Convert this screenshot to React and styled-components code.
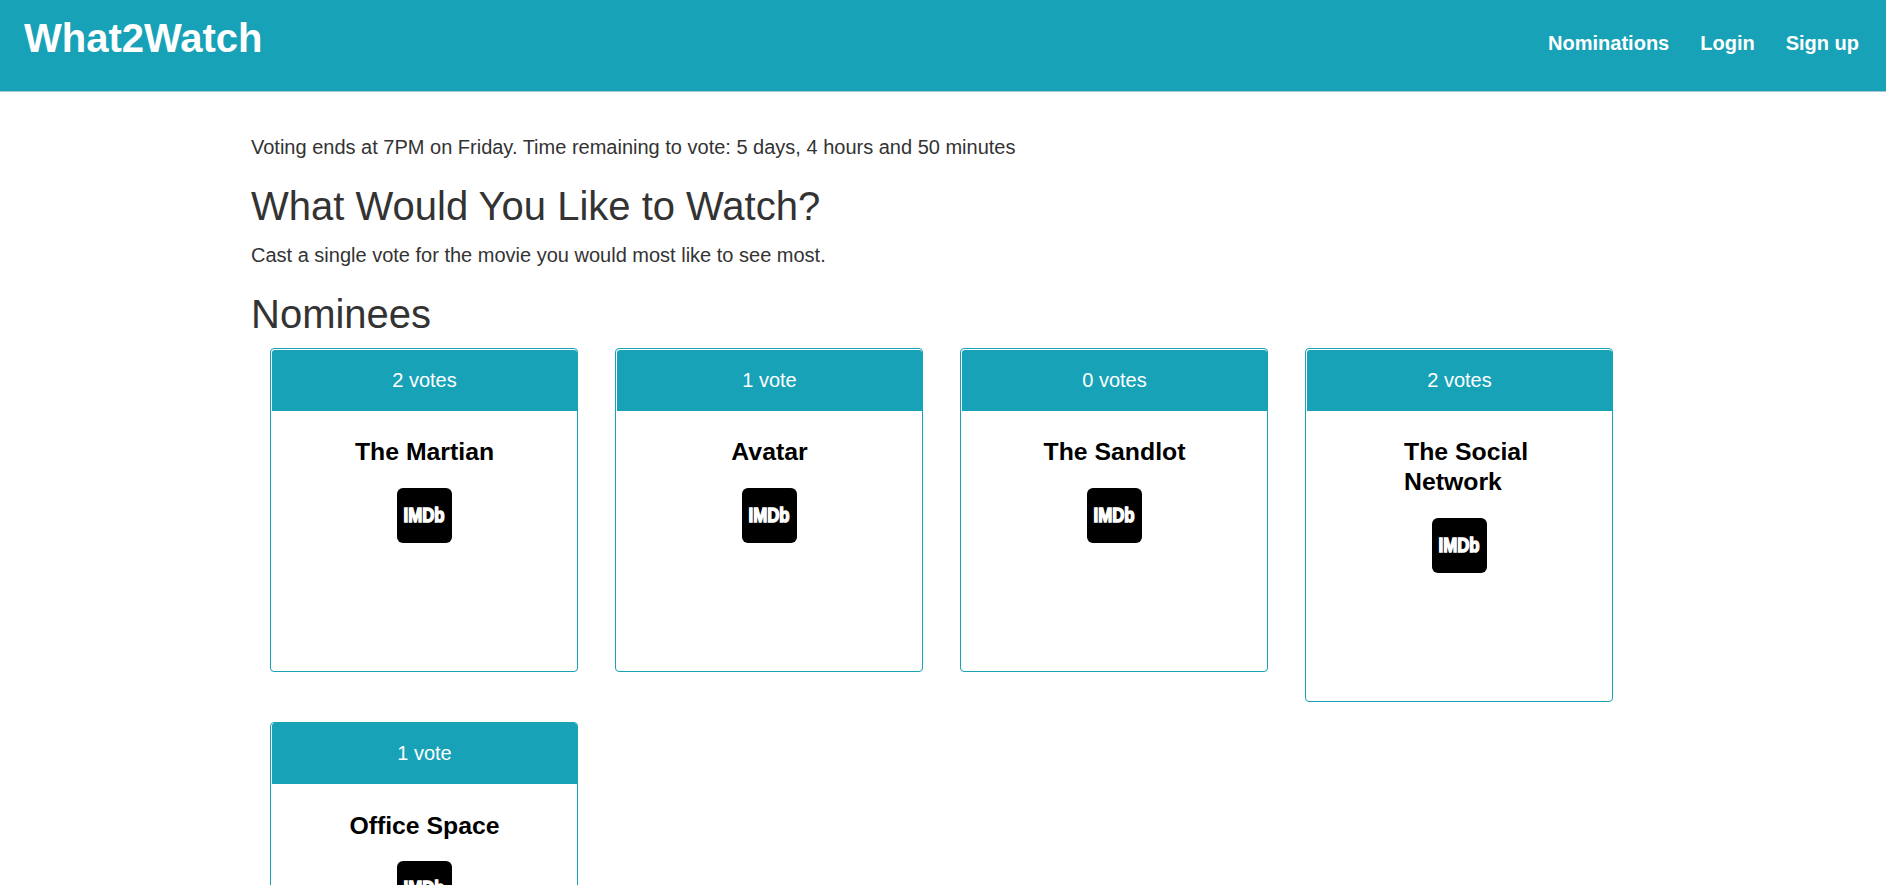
import React from "react";
import styled, { createGlobalStyle } from "styled-components";

const teal = "#17a2b8";

const GlobalStyle = createGlobalStyle`
  *, *::before, *::after { box-sizing: border-box; }
  html, body { margin: 0; height: 100%; overflow: hidden; }
  body {
    background: #fff;
    color: #333;
    font-family: "Liberation Sans", Arial, sans-serif;
    font-size: 20px;
    line-height: 28px;
  }
`;

const Header = styled.header`
  display: flex;
  justify-content: space-between;
  align-items: flex-start;
  height: 92px;
  padding: 0 27px 0 24px;
  background: ${teal};
  border-bottom: 1px solid #a9c5ca;
`;

const Brand = styled.a`
  padding-top: 16px;
  color: #fff;
  font-size: 40px;
  font-weight: 700;
  line-height: 44px;
  text-decoration: none;
`;

const Nav = styled.nav`
  display: flex;
  gap: 31px;
  padding-top: 29px;
`;

const NavLink = styled.a`
  color: #fff;
  font-weight: 700;
  text-decoration: none;
`;

const Main = styled.main`
  width: 1384px;
  margin: 0 auto;
  padding-top: 41px;
`;

const Copy = styled.p`
  margin: 0;
`;

const Heading = styled.h2`
  margin: 23px 0 13px;
  font-size: 40px;
  font-weight: 400;
  line-height: 44px;
`;

const Nominees = styled.section`
  display: grid;
  grid-template-columns: repeat(4, 308px);
  column-gap: 37px;
  row-gap: 20px;
  align-items: start;
  margin-top: -1px;
  padding-left: 19px;
`;

const Card = styled.article`
  display: flex;
  flex-direction: column;
  min-height: 324px;
  padding: ${(p) => (p.$flush ? "0 0 0 1px" : "1px 0 0 1px")};
  border: 1px solid ${teal};
  border-radius: 4px;
`;

const Votes = styled.div`
  height: 61px;
  padding-top: 16px;
  border-radius: 3px 3px 0 0;
  background: ${teal};
  color: #fff;
  text-align: center;
`;

const CardBody = styled.div`
  display: flex;
  flex-direction: column;
  align-items: center;
  padding: ${(p) => (p.$flush ? 27 : 26)}px 0 128px;
`;

const Title = styled.h3`
  width: ${(p) => (p.$wrapped ? "147px" : "auto")};
  margin: 0 0 ${(p) => (p.$flush ? 20 : 21)}px;
  padding-left: ${(p) => (p.$wrapped ? "18px" : "0")};
  color: #000;
  font-size: 24.8px;
  line-height: 30px;
`;

const Badge = styled.svg`
  display: block;
  width: 55px;
  height: 55px;
`;

const BadgeText = styled.text`
  fill: #fff;
  stroke: #fff;
  stroke-width: 1.6px;
  font: 700 21px "Liberation Sans", Arial, sans-serif;
`;

const ImdbBadge = () => (
  <Badge viewBox="0 0 55 55" role="img" aria-label="IMDb">
    <rect width="55" height="55" rx="6" fill="#000" />
    <BadgeText transform="translate(6.5 34.4) scale(.8 1)">IMDb</BadgeText>
  </Badge>
);

const movies = [
  { title: "The Martian", votes: 2 },
  { title: "Avatar", votes: 1 },
  { title: "The Sandlot", votes: 0 },
  { title: "The Social Network", votes: 2, wrapped: true },
  { title: "Office Space", votes: 1, flush: true },
];

export default function App() {
  return (
    <>
      <GlobalStyle />
      <Header>
        <Brand>What2Watch</Brand>
        <Nav>
          <NavLink>Nominations</NavLink>
          <NavLink>Login</NavLink>
          <NavLink>Sign up</NavLink>
        </Nav>
      </Header>
      <Main>
        <Copy>
          Voting ends at 7PM on Friday. Time remaining to vote: 5 days, 4 hours and 50 minutes
        </Copy>
        <Heading>What Would You Like to Watch?</Heading>
        <Copy>Cast a single vote for the movie you would most like to see most.</Copy>
        <Heading>Nominees</Heading>
        <Nominees>
          {movies.map(({ title, votes, wrapped, flush }) => (
            <Card key={title} $flush={flush}>
              <Votes>
                {votes} {votes === 1 ? "vote" : "votes"}
              </Votes>
              <CardBody $flush={flush}>
                <Title $wrapped={wrapped} $flush={flush}>{title}</Title>
                <ImdbBadge />
              </CardBody>
            </Card>
          ))}
        </Nominees>
      </Main>
    </>
  );
}
